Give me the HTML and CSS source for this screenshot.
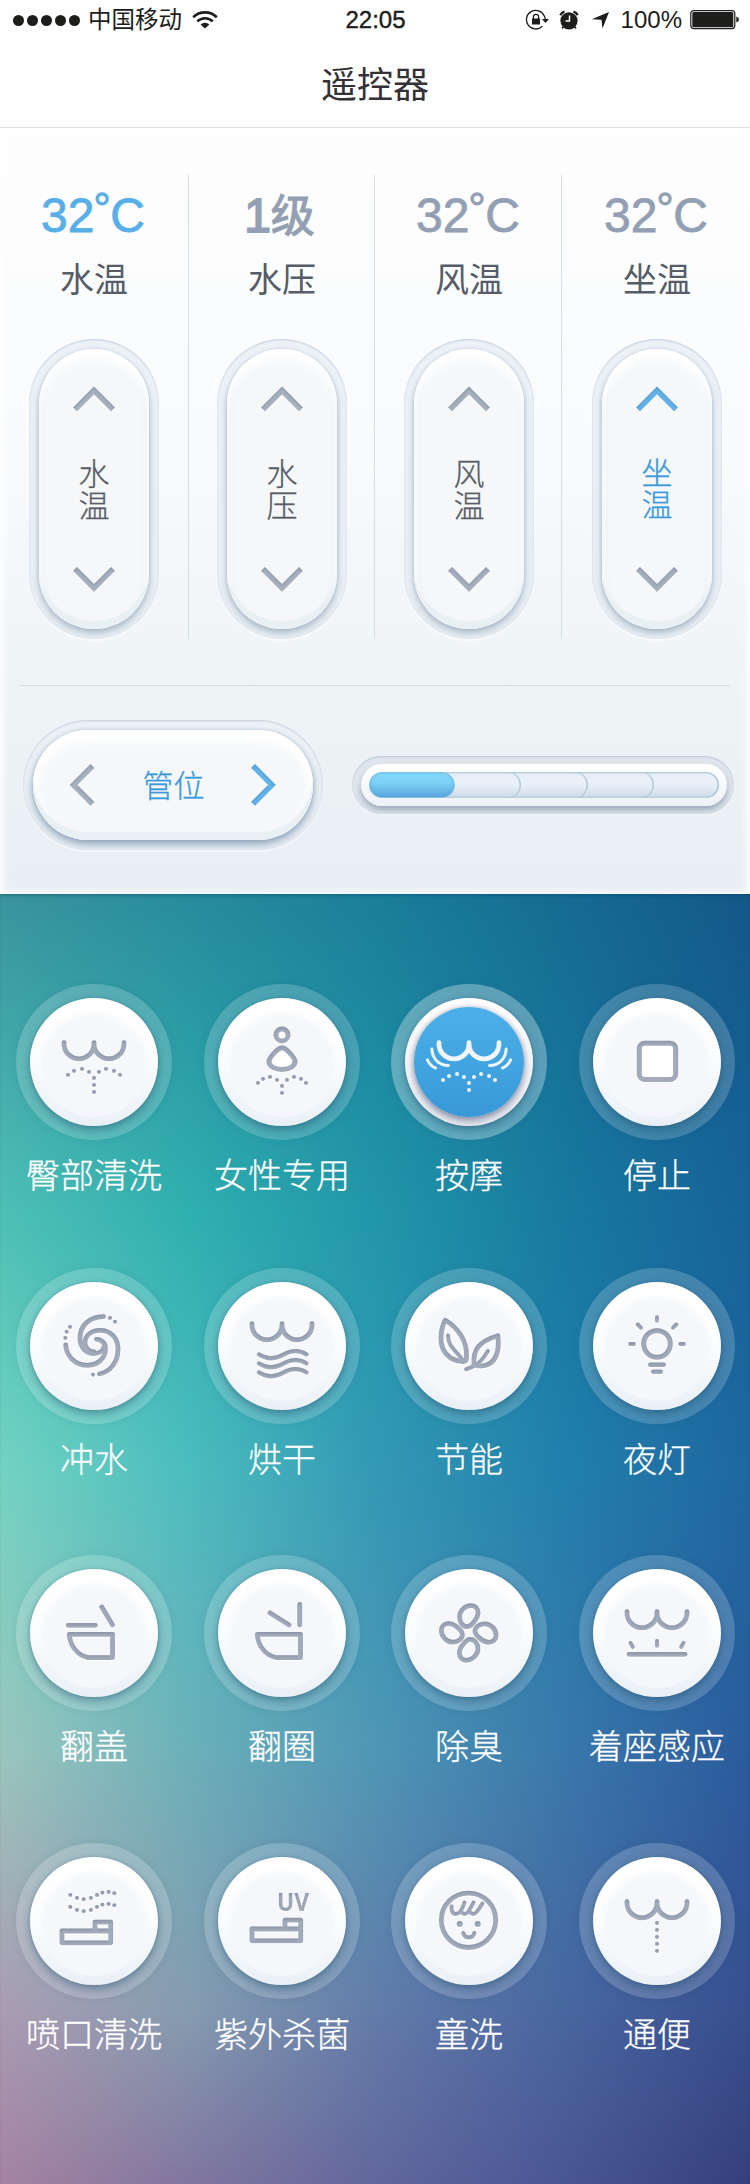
FILE: index.html
```html
<!DOCTYPE html>
<html lang="zh-CN">
<head>
<meta charset="utf-8">
<title>遥控器</title>
<link rel="stylesheet" href="styles.css">
</head>
<body>
<svg class="defs" width="0" height="0" aria-hidden="true">
  <defs>
    <filter id="inset" x="-10%" y="-10%" width="120%" height="125%">
      <feOffset in="SourceAlpha" dy="2" result="o"/>
      <feGaussianBlur in="o" stdDeviation="1" result="b"/>
      <feComposite in="SourceAlpha" in2="b" operator="out" result="edge"/>
      <feFlood flood-color="#4d6078" flood-opacity=".34"/>
      <feComposite in2="edge" operator="in" result="shade"/>
      <feOffset in="SourceAlpha" dy="1" result="lo"/>
      <feFlood flood-color="#fff"/>
      <feComposite in2="lo" operator="in" result="light"/>
      <feMerge><feMergeNode in="light"/><feMergeNode in="SourceGraphic"/><feMergeNode in="shade"/></feMerge>
    </filter>
    <path id="curves" d="M34 44.7v1.2a15 15 0 0 0 30 0v-1.2M64 45.9a15 15 0 0 0 30 0v-1.2"/>
    <g id="spray">
      <circle cx="38" cy="77" r="2"/><circle cx="44" cy="73" r="2"/><circle cx="52" cy="71" r="2"/><circle cx="59" cy="74" r="2"/>
      <circle cx="69" cy="74" r="2"/><circle cx="76" cy="71" r="2"/><circle cx="84" cy="73" r="2"/><circle cx="90" cy="77" r="2"/>
      <circle cx="64" cy="80" r="2"/><circle cx="64" cy="87" r="2"/>
    </g>
    <path id="bowl" d="M39.3 65.3H82.5V88.7H58C47 86 40 77 39.3 65.3z"/>
    <path id="nozzle" d="M65 74V65.2H80.7V85.8H32V74H80.7"/>
    <path id="petal" d="M62 57.7C57.5 57.7 54.5 53 54.5 48C54.5 42 60 36.7 66 36.7C70.5 36.7 73 40 73 44C73 49 66.5 57.7 62 57.7z"/>
    <path id="wave" d="M41 72.5c7.500 5 15.500 5 24 .3s16-5 23.500-.3"/>
    <g id="mist">
      <circle cx="40.300" cy="38" r="2"/><circle cx="47" cy="41" r="2"/><circle cx="53.700" cy="42.300" r="2"/><circle cx="60.900" cy="41" r="2"/>
      <circle cx="67" cy="38" r="2"/><circle cx="72.400" cy="35.700" r="2"/><circle cx="78.600" cy="35" r="2"/><circle cx="84.300" cy="36.300" r="2"/>
    </g>
  </defs>
</svg>

<header class="header">
  <div class="status">
    <div class="status-left">
      <span class="signal"><i></i><i></i><i></i><i></i><i></i></span>
      <span class="carrier">中国移动</span>
      <svg class="wifi" width="26" height="20" viewBox="0 0 26 20"><g fill="none" stroke="#1d1d1b" stroke-width="2.6"><path d="M1.200 7.200a16.800 16.800 0 0 1 23.600 0"/><path d="M5.300 11.400a11 11 0 0 1 15.400 0"/></g><path fill="#1d1d1b" d="M8.600 14.600a6.200 6.200 0 0 1 8.800 0L13 18.600z"/></svg>
    </div>
    <div class="clock">22:05</div>
    <div class="status-right">
      <svg width="25" height="22" viewBox="0 0 25 22"><path d="M19.300 7A9.300 9.300 0 1 0 17.300 17.300M19.400 7A9.300 9.300 0 0 1 20.300 11" fill="none" stroke="#1d1d1b" stroke-width="1.300"/><path fill="#1d1d1b" d="M17 10h7l-3.500 4zM7 9.600h8v6H7z"/><path d="M8.400 10V8a2.600 2.600 0 0 1 5.200 0v2" fill="none" stroke="#1d1d1b" stroke-width="1.300"/></svg>
      <svg class="alarm" width="20" height="20" viewBox="0 0 20 20"><circle cx="10" cy="10.800" r="8.600" fill="#1d1d1b"/><path d="M1.300 5.200Q2.500 2.500 5.500 1.600M18.700 5.200Q17.500 2.500 14.500 1.600" fill="none" stroke="#1d1d1b" stroke-width="2.200"/><path d="M10.500 5.500v5.500H6.500" fill="none" stroke="#fff" stroke-width="1.500"/><path d="M4.500 16.500l-1.500 2M15.500 16.500l1.500 2" stroke="#1d1d1b" stroke-width="1.500"/></svg>
      <svg class="arrow" width="19" height="19" viewBox="0 0 19 19"><path fill="#1d1d1b" d="M18 1L11.500 17.500L10.500 8.800L.8 8.300z"/></svg>
      <span class="percent">100%</span>
      <svg class="battery" width="50" height="20" viewBox="0 0 50 20"><rect x=".8" y=".6" width="44" height="18" rx="3" fill="none" stroke="#1d1d1b" stroke-width="1.200"/><rect x="2.300" y="2" width="41" height="15.200" rx="1.500" fill="#1d1d1b"/><path d="M46.300 6.500q2.700 1 2.700 3t-2.700 3z" fill="#1d1d1b"/></svg>
    </div>
  </div>
  <h1 class="title">遥控器</h1>
</header>

<section class="panel">
  <div class="columns">
    <div class="column">
      <div class="value active">32<span class="deg">°</span>C</div>
      <div class="name">水温</div>
      <div class="track"><div class="pill">
        <svg class="chev" width="44" height="27" viewBox="0 0 44 27"><path d="M3 23.500L22 4.500L41 23.500"/></svg>
        <span class="pill-text">水温</span>
        <svg class="chev" width="44" height="27" viewBox="0 0 44 27"><path d="M3 3L22 22L41 3"/></svg>
      </div></div>
    </div>
    <div class="column">
      <div class="value level">1<b>级</b></div>
      <div class="name">水压</div>
      <div class="track"><div class="pill">
        <svg class="chev" width="44" height="27" viewBox="0 0 44 27"><path d="M3 23.500L22 4.500L41 23.500"/></svg>
        <span class="pill-text">水压</span>
        <svg class="chev" width="44" height="27" viewBox="0 0 44 27"><path d="M3 3L22 22L41 3"/></svg>
      </div></div>
    </div>
    <div class="column">
      <div class="value">32<span class="deg">°</span>C</div>
      <div class="name">风温</div>
      <div class="track"><div class="pill">
        <svg class="chev" width="44" height="27" viewBox="0 0 44 27"><path d="M3 23.500L22 4.500L41 23.500"/></svg>
        <span class="pill-text">风温</span>
        <svg class="chev" width="44" height="27" viewBox="0 0 44 27"><path d="M3 3L22 22L41 3"/></svg>
      </div></div>
    </div>
    <div class="column">
      <div class="value">32<span class="deg">°</span>C</div>
      <div class="name">坐温</div>
      <div class="track"><div class="pill">
        <svg class="chev on" width="44" height="27" viewBox="0 0 44 27"><path d="M3 23.500L22 4.500L41 23.500"/></svg>
        <span class="pill-text on">坐温</span>
        <svg class="chev" width="44" height="27" viewBox="0 0 44 27"><path d="M3 3L22 22L41 3"/></svg>
      </div></div>
    </div>
  </div>
  <div class="position-row">
    <div class="track wide"><div class="pill">
      <svg class="chev" width="27" height="44" viewBox="0 0 27 44"><path d="M23.500 3L4.500 22L23.500 41"/></svg>
      <span class="pill-text on">管位</span>
      <svg class="chev on" width="27" height="44" viewBox="0 0 27 44"><path d="M3 3L22 22L3 41"/></svg>
    </div></div>
    <div class="meter"><div class="meter-body"><div class="groove">
      <i class="step s5"></i><i class="step s4"></i><i class="step s3"></i><i class="step s2"></i><i class="step fill"></i>
    </div></div></div>
  </div>
</section>

<main class="functions">
  <div class="mesh"><i class="m m1"></i><i class="m m2"></i><i class="m m3"></i><i class="m m4"></i><i class="m m5"></i><i class="m m6"></i></div>
  <div class="grid">
    <div class="item"><div class="ring"><div class="knob"><svg class="icon" viewBox="0 0 128 128"><use href="#curves"/><g class="dot"><use href="#spray"/><circle cx="64" cy="94" r="2"/></g></svg></div></div><div class="label">臀部清洗</div></div>
    <div class="item"><div class="ring"><div class="knob"><svg class="icon" viewBox="0 0 128 128"><circle class="white" cx="64" cy="37" r="6"/><path class="white" d="M64 49.800c-3.500 0-13 9.500-13 14c0 4.500 6 7.700 13 7.700s13-3.200 13-7.700c0-4.500-9.500-14-13-14z"/><g class="dot"><circle cx="40" cy="85" r="2"/><circle cx="45" cy="81" r="2"/><circle cx="52" cy="79" r="2"/><circle cx="59" cy="82" r="2"/><circle cx="69" cy="82" r="2"/><circle cx="76" cy="79" r="2"/><circle cx="83" cy="81" r="2"/><circle cx="88" cy="85" r="2"/><circle cx="64" cy="88" r="2"/><circle cx="64" cy="95" r="2"/></g></svg></div></div><div class="label">女性专用</div></div>
    <div class="item selected"><div class="ring"><div class="knob"><svg class="icon" viewBox="0 0 128 128"><use href="#curves"/><g class="thin"><path d="M26.800 51c.7 10 7.200 16.500 16.700 16.500M22.500 62c1.500 3.700 4.500 6.500 8 8M101.200 51c-.7 10-7.200 16.500-16.700 16.500M105.500 62c-1.500 3.700-4.500 6.500-8 8"/></g><g class="dot"><use href="#spray" y="5"/></g></svg></div></div><div class="label">按摩</div></div>
    <div class="item"><div class="ring"><div class="knob"><svg class="icon" viewBox="0 0 128 128"><rect class="white" x="46.300" y="45.200" width="36.300" height="36.300" rx="5.500"/></svg></div></div><div class="label">停止</div></div>

    <div class="item"><div class="ring"><div class="knob"><svg class="icon" viewBox="0 0 128 128"><path d="M66.500 57.300c5 0 9 4 9 9.500c0 9.500-7.500 16.500-18.500 16.500c-12 0-21-9.500-21.300-20.500"/><path d="M73.500 34.700C60 35 50 43 50 56C50 66 56 71.500 64 71.500C69 71.500 73 69 74 65"/><path d="M69.500 92C80 90 88 80.500 88 67.500C88 55.500 80 48.300 70 48.300C61 48.300 55 54 55 60.500C55 66 59 69.500 64 70"/><g class="dot"><circle cx="80" cy="36" r="2"/><circle cx="85" cy="39.700" r="2"/><circle cx="40" cy="45" r="2"/><circle cx="36.700" cy="49.700" r="2"/><circle cx="35.300" cy="56" r="2"/><circle cx="63" cy="92.700" r="2"/></g></svg></div></div><div class="label">冲水</div></div>
    <div class="item"><div class="ring"><div class="knob"><svg class="icon" viewBox="0 0 128 128"><use href="#curves" y="-3"/><g class="mid"><use href="#wave"/><use href="#wave" y="9"/><use href="#wave" y="18"/></g></svg></div></div><div class="label">烘干</div></div>
    <div class="item"><div class="ring"><div class="knob"><svg class="icon" viewBox="0 0 128 128"><path d="M40.300 38.300C52 45.500 62.500 58 61.500 75.500Q61.500 79.500 58.500 79.500C44 79.500 36 69 36 57C36 50 37 44 40.300 38.300z"/><path class="thin4" d="M43 53.500C43 66 52 69 57.500 78"/><path d="M92.800 53.800C94.500 66 92.500 84 76 84Q72 84 69 82.800C68 68 73 60 92.800 53.800z"/><path class="thin4" d="M83 69C79 76 74 83.500 61 87.300"/></svg></div></div><div class="label">节能</div></div>
    <div class="item"><div class="ring"><div class="knob"><svg class="icon" viewBox="0 0 128 128"><circle cx="64" cy="62" r="13.300" stroke-width="5"/><g class="thin4"><path d="M64 35.200v3.600M37.200 62h3.700M87.200 62h3.700M44.700 42.500l3.300 3.300M83.300 42.500l-3.300 3.300"/></g><path d="M57.300 82.700h13.400M60.300 89.700h7.400" stroke-width="4.600"/></svg></div></div><div class="label">夜灯</div></div>

    <div class="item"><div class="ring"><div class="knob"><svg class="icon" viewBox="0 0 128 128"><path d="M38.300 56.300H65.300M71.700 38L82.500 56"/><use href="#bowl"/></svg></div></div><div class="label">翻盖</div></div>
    <div class="item"><div class="ring"><div class="knob"><svg class="icon" viewBox="0 0 128 128"><path d="M52 44L71 56M81.700 35.500V56"/><use href="#bowl"/></svg></div></div><div class="label">翻圈</div></div>
    <div class="item"><div class="ring"><div class="knob"><svg class="icon" viewBox="0 0 128 128"><use href="#petal"/><use href="#petal" transform="rotate(90 63.700 64)"/><use href="#petal" transform="rotate(180 63.700 64)"/><use href="#petal" transform="rotate(270 63.700 64)"/></svg></div></div><div class="label">除臭</div></div>
    <div class="item"><div class="ring"><div class="knob"><svg class="icon" viewBox="0 0 128 128"><use href="#curves" y="-2"/><path d="M36.200 85.300H92"/><path class="thin4" d="M64 72v4.800M37.500 74l2.300 4M90.500 74l-2.300 4"/></svg></div></div><div class="label">着座感应</div></div>

    <div class="item"><div class="ring"><div class="knob"><svg class="icon" viewBox="0 0 128 128"><g class="dot"><use href="#mist"/><use href="#mist" y="12"/></g><use href="#nozzle"/></svg></div></div><div class="label">喷口清洗</div></div>
    <div class="item"><div class="ring"><div class="knob"><svg class="icon" viewBox="0 0 128 128"><text class="uv" x="59" y="54" textLength="32" lengthAdjust="spacingAndGlyphs">UV</text><use href="#nozzle" x="2" y="-2"/></svg></div></div><div class="label">紫外杀菌</div></div>
    <div class="item"><div class="ring"><div class="knob"><svg class="icon" viewBox="0 0 128 128"><circle cx="63.500" cy="63.300" r="27.200"/><path class="thin4" d="M46.500 49.500q-.5 7.500 4.500 7.500t8.500-11.500M56 54q1 3 4 3t8.500-11.500M64.500 54q1 3 4 3t9-10.500"/><path class="thin4" d="M58.300 76q1 4.500 5.500 4.500t5.500-4.500"/><g class="dot"><circle cx="54.700" cy="67" r="3"/><circle cx="72.700" cy="67" r="3"/></g></svg></div></div><div class="label">童洗</div></div>
    <div class="item"><div class="ring"><div class="knob"><svg class="icon" viewBox="0 0 128 128"><use href="#curves"/><g class="dot"><circle cx="64" cy="66" r="2"/><circle cx="64" cy="73" r="2"/><circle cx="64" cy="80" r="2"/><circle cx="64" cy="87" r="2"/><circle cx="64" cy="94" r="2"/></g></svg></div></div><div class="label">通便</div></div>
  </div>
</main>
</body>
</html>
```
FILE: styles.css
```css
* { box-sizing: border-box; }
body {
  margin: 0;
  width: 750px;
  height: 2184px;
  font-family: "Liberation Sans", "Noto Sans CJK SC", sans-serif;
  background: #fff;
}
svg { display: block; }
.defs { position: absolute; }

/* Header */
.header { height: 128px; background: #fefefe; border-bottom: 1px solid #dbe3e1; }
.status { display: grid; grid-template-columns: 1fr auto 1fr; height: 40px; align-items: center; padding: 0 10px 0 13px; color: #1d1d1b; }
.status-left, .status-right { display: flex; align-items: center; }
.status-right { justify-content: flex-end; }
.signal { display: flex; gap: 3px; }
.signal i { width: 11px; height: 11px; border-radius: 50%; background: #1d1d1b; }
.carrier { font: 400 23.500px/40px "Noto Sans CJK SC", sans-serif; margin: -4px 0 0 8px; }
.wifi { margin-left: 10px; }
.clock { font-size: 24px; line-height: 40px; margin-left: -2px; -webkit-text-stroke: .4px #1d1d1b; }
.alarm { margin-left: 9px; }
.arrow { margin-left: 12px; }
.percent { font-size: 24px; line-height: 40px; margin-left: 11px; }
.battery { margin-left: 8px; }
.title { margin: 19px 0 0; font: 400 36px/46px "Noto Sans CJK SC", sans-serif; color: #333036; text-align: center; }

/* Control panel */
.panel {
  height: 766px;
  padding-top: 47px;
  background: linear-gradient(#fefefe, #f8fafc 45%, #eff4f7 70%, #e9eef2);
  box-shadow: inset 7px 0 7px -3px rgba(255,255,255,.8), inset -7px 0 7px -3px rgba(255,255,255,.8), inset 0 -7px 7px -3px rgba(255,255,255,.5);
}
.columns { display: grid; grid-template-columns: 189px 186px 187px 188px; height: 464px; }
.column { display: flex; flex-direction: column; align-items: center; border-right: 1px solid #d5dce2; }
.column:nth-child(2) { padding-left: 1px; }
.column:nth-child(3) { padding-left: 2px; }
.column:nth-child(4) { padding-left: 2px; border-right: 0; }
.value { height: 80px; padding-right: 2px; color: #93a0b3; font-size: 48px; line-height: 82px; white-space: nowrap; -webkit-text-stroke: .8px currentColor; }
.value.active { color: #58afe8; }
.deg { display: inline-block; width: 16px; font-size: 44px; line-height: 0; vertical-align: 8px; text-indent: -1px; -webkit-text-stroke-width: .8px; }
.level { padding-right: 5px; -webkit-text-stroke-width: 1.800px; }
.level b { font: 400 44px/1 "Noto Sans CJK SC", sans-serif; -webkit-text-stroke-width: 1.200px; }
.name { height: 44px; margin-top: 1px; font: 400 34px/44px "Noto Sans CJK SC", sans-serif; color: #565d69; }
.track {
  width: 130px; height: 300px; margin-top: 39px; padding: 10px; border-radius: 65px;
  background: linear-gradient(#edf2f7, #e9eff4);
  box-shadow: inset 0 1px 2px rgba(150,170,195,.5), 0 2px 2px rgba(255,255,255,.8);
}
.pill {
  display: flex; flex-direction: column; align-items: center; justify-content: space-between;
  width: 110px; height: 280px; padding: 37px 0 36px; border-radius: 55px;
  background: #f5f7f9;
  box-shadow: inset 0 -9px 1px -1px #e9f0f4, inset 0 10px 10px #fff, inset 8px 0 2px -1px #f1f5f8, inset -8px 0 2px -1px #f1f5f8, 0 4px 7px rgba(110,135,160,.5), 0 0 3px rgba(150,175,200,.45);
}
.chev { fill: none; stroke: #a7b0c0; stroke-width: 5.500; filter: url(#inset); }
.chev.on { stroke: #62b4ea; }
.pill-text { width: 31px; margin-top: -4px; font: 300 31px/32px "Noto Sans CJK SC", sans-serif; color: #555c68; overflow-wrap: anywhere; text-align: center; -webkit-text-stroke: .3px currentColor; }
.pill-text.on { margin-top: -6px; color: #3a9adb; }

.position-row { display: flex; margin: 46px 20px 0; border-top: 1px solid #d3dbe1; }
.track.wide { width: 300px; height: 130px; margin: 34px 0 0 3px; }
.wide .pill { flex-direction: row; width: 280px; height: 110px; padding: 0 36px; box-shadow: inset 0 -8px 1px #e9f0f4, inset 0 12px 8px #fff, inset 8px 0 3px #f9fafb, inset -8px 0 3px #f9fafb, 0 4px 8px rgba(100,130,160,.7), 0 0 3px rgba(150,175,200,.5); }
.wide .pill-text { width: auto; margin: -2px 0 0 1px; }
.meter {
  width: 382px; height: 58px; margin: 70px 0 0 29px; padding: 8px 7px 8px 9px; border-radius: 29px;
  background: #dfe6ee;
  box-shadow: inset 0 1px 2px rgba(150,170,195,.5), 0 2px 2px rgba(255,255,255,.6);
}
.meter-body { height: 42px; padding: 8px; border-radius: 21px; background: linear-gradient(#fff, #ecf2f6); box-shadow: 0 4px 6px rgba(110,130,150,.6); }
.groove { display: grid; height: 26px; border-radius: 13px; overflow: hidden; background: linear-gradient(#e4ecf5, #eaf1fb 35%, #e3ecf5 60%, #cbdae6); box-shadow: inset 0 0 0 1.500px #b9d0de; }
.step { grid-area: 1 / 1; height: 26px; border-radius: 0 13px 13px 0; box-shadow: inset -1.500px 0 0 #b2c6d6; }
.s5 { width: 350px; }
.s4 { width: 285px; }
.s3 { width: 219px; }
.s2 { width: 152px; }
.fill { width: 86px; border-radius: 13px; border: 1px solid #7fc0e4; background: linear-gradient(#84dafa, #7bd2f6 40%, #5ba4dd); box-shadow: inset 0 0 3px rgba(80,160,215,.6); }

/* Function buttons */
.functions { display: grid; height: 1290px; background: #348; }
.mesh { grid-area: 1 / 1; display: grid; }
.m { grid-area: 1 / 1; }
.m1 { background: linear-gradient(90deg, #3a949e, #288c9d 25%, #1b7f99 50%, #166c93 75%, #145889); }
.m2 { background: linear-gradient(90deg, #4fc0b6, #30b0b0 25%, #2197aa 50%, #187aa0 75%, #176398); mask: linear-gradient(transparent 0, #000 25%); }
.m3 { background: linear-gradient(90deg, #74d3c2, #4dbdbf 25%, #3499b5 50%, #2280ac 75%, #1f67a0); mask: linear-gradient(transparent 25%, #000 45%); }
.m4 { background: linear-gradient(90deg, #9bc5be, #6db0b9 25%, #5096b5 50%, #3a78ab 75%, #2b5b9d); mask: linear-gradient(transparent 45%, #000 67%); }
.m5 { background: linear-gradient(90deg, #aa9bb2, #869bb0 25%, #637ba9 50%, #4966a0 75%, #374f8e); mask: linear-gradient(transparent 67%, #000 87%); }
.m6 { background: linear-gradient(90deg, #a583a2, #81769f 25%, #62679c 50%, #4a5695 75%, #363f7d); mask: linear-gradient(transparent 87%, #000 100%); }
.grid { grid-area: 1 / 1; z-index: 1; display: grid; grid-template-columns: 188px 187px 188px 156px; grid-template-rows: 284px 287px 288px auto; padding: 90px 0 0 16px; box-shadow: inset 0 3px 3px -1px rgba(0,60,90,.3); }
.item { width: 156px; }
.ring { width: 156px; height: 156px; padding: 14px; border-radius: 50%; background: rgba(255,255,255,.18); box-shadow: 0 0 8px rgba(0,50,80,.08); }
.knob {
  width: 128px; height: 128px; border-radius: 50%; position: relative;
  background: radial-gradient(circle, #f5f7fa 54.300px, transparent 55.300px), linear-gradient(#fff, #fcfdfe 45%, #e9f0f5);
  box-shadow: 0 4px 8px rgba(20,70,100,.42), 0 0 3px rgba(20,70,100,.2);
}
.knob::before { content: ""; position: absolute; inset: 9px; border-radius: 50%; box-shadow: inset 0 6px 6px #fff; }
.icon { position: relative; width: 128px; height: 128px; fill: none; stroke: #a2abbb; stroke-width: 4.800; stroke-linecap: round; stroke-linejoin: round; filter: url(#inset); }
.icon .white { fill: #fff; stroke-width: 5; }
.icon .dot { fill: #a2abbb; stroke: none; }
.icon .thin { stroke-width: 3; }
.icon .thin4 { stroke-width: 3.900; }
.icon .mid { stroke-width: 4.200; }
.uv { font: 700 25px "Open Sans", "Noto Sans", sans-serif; fill: #a2abbb; stroke: none; }
.selected .ring { background: rgba(255,255,255,.3); }
.selected .knob { background: linear-gradient(#fff, #eef1f5); }
.selected .knob::before { background: linear-gradient(#4cb0e8, #3898d8); box-shadow: 0 4px 8px rgba(60,70,110,.55), 0 0 4px rgba(60,70,110,.25); }
.selected .icon { stroke: #eef6fb; filter: none; }
.selected .icon .dot { fill: #eef6fb; }
.label { margin: 11px -20px 0; font: 300 34px/46px "Noto Sans CJK SC", sans-serif; color: #fff; text-align: center; white-space: nowrap; -webkit-text-stroke: .3px #fff; }
```
